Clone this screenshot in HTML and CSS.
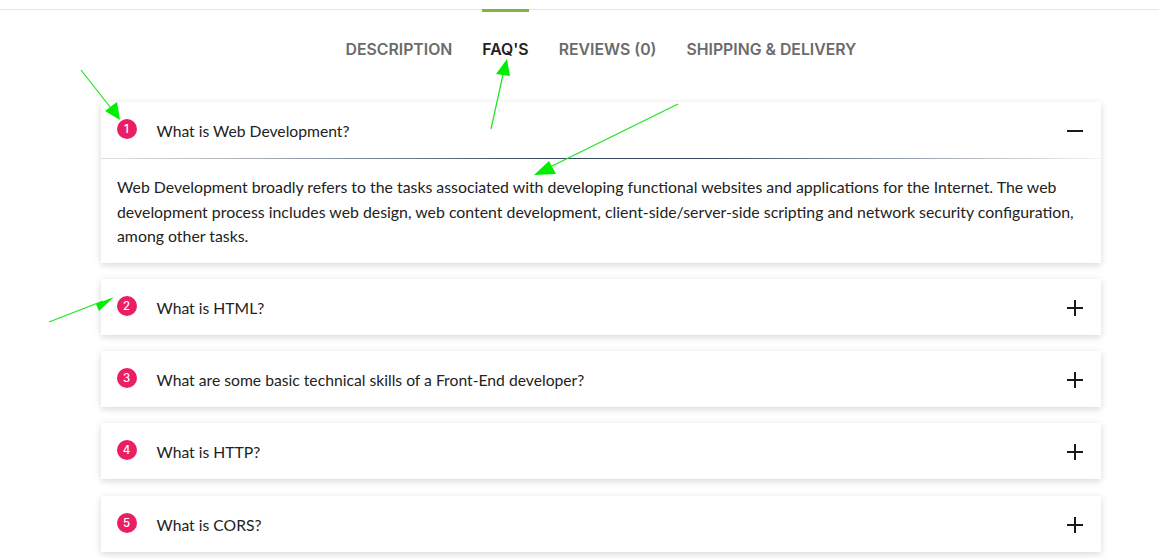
FILE: index.html
```html
<!DOCTYPE html>
<html lang="en">
<head>
<meta charset="utf-8">
<title>FAQ's</title>
<link rel="stylesheet" href="styles.css">
</head>
<body>
<div class="page">
  <div class="tabs-bar">
    <div class="container">
      <ul class="tabs">
        <li class="tab">Description</li>
        <li class="tab active">FAQ's</li>
        <li class="tab">Reviews (0)</li>
        <li class="tab">Shipping &amp; Delivery</li>
      </ul>
    </div>
  </div>

  <div class="container faq-list">
    <div class="faq open">
      <div class="faq-head">
        <span class="badge">1</span>
        <span class="question">What is Web Development?</span>
        <span class="toggle minus"></span>
      </div>
      <div class="faq-body">
        <p>Web Development broadly refers to the tasks associated with developing functional websites and applications for the Internet. The web development process includes web design, web content development, client-side/server-side scripting and network security configuration, among other tasks.</p>
      </div>
    </div>
    <div class="faq">
      <div class="faq-head">
        <span class="badge">2</span>
        <span class="question">What is HTML?</span>
        <span class="toggle plus"></span>
      </div>
    </div>
    <div class="faq">
      <div class="faq-head">
        <span class="badge">3</span>
        <span class="question">What are some basic technical skills of a Front-End developer?</span>
        <span class="toggle plus"></span>
      </div>
    </div>
    <div class="faq">
      <div class="faq-head">
        <span class="badge">4</span>
        <span class="question">What is HTTP?</span>
        <span class="toggle plus"></span>
      </div>
    </div>
    <div class="faq">
      <div class="faq-head">
        <span class="badge">5</span>
        <span class="question">What is CORS?</span>
        <span class="toggle plus"></span>
      </div>
    </div>
  </div>

  <svg class="annotations" width="1159" height="558" viewBox="0 0 1159 558">
    <g stroke="#19e619" stroke-width="1.2" fill="none">
      <line x1="81" y1="70" x2="114" y2="112"/>
      <line x1="491" y1="129" x2="504" y2="70"/>
      <line x1="678" y1="104" x2="546" y2="169"/>
      <line x1="49" y1="322" x2="103" y2="301"/>
    </g>
    <g fill="#00ee00">
      <polygon points="120,120 105,111 117,102"/>
      <polygon points="507,59 510,76 496,74"/>
      <polygon points="534,175 549,161 556,174"/>
      <polygon points="114,297 96,304 99,311"/>
    </g>
  </svg>
</div>
</body>
</html>
```
FILE: styles.css
```css
* { box-sizing: border-box; }

html, body {
  margin: 0;
  padding: 0;
  background: #ffffff;
}

body {
  font-family: "Lato", "Liberation Sans", sans-serif;
  color: #222222;
  overflow: hidden;
}

.page {
  position: relative;
  width: 1159px;
  height: 558px;
  padding-top: 9px;
}

.tabs-bar {
  border-top: 1px solid #e6e6e6;
}

.container {
  width: 1000px;
  margin-left: 101px;
}

.tabs {
  list-style: none;
  margin: 0;
  padding: 28px 0 0;
  display: flex;
  justify-content: center;
  gap: 30px;
}

.tab {
  position: relative;
  font-family: "Inter", "Open Sans", sans-serif;
  font-weight: 600;
  font-size: 15.8px;
  line-height: 24px;
  text-transform: uppercase;
  color: #6b6b6b;
  letter-spacing: 0;
}

.tab.active {
  color: #222222;
}

.tab.active::before {
  content: "";
  position: absolute;
  left: 0;
  right: 0;
  top: -29px;
  height: 3px;
  background: #81b441;
}

.faq-list {
  margin-top: 40px;
  display: flex;
  flex-direction: column;
  gap: 16.3px;
}

.faq {
  background: #ffffff;
  box-shadow: 0 2px 7px rgba(0, 0, 0, 0.16);
}

.faq-head {
  height: 56px;
  display: flex;
  align-items: center;
  padding: 2px 18px 0 15.5px;
}

.badge {
  width: 20px;
  height: 20px;
  border-radius: 50%;
  background: #ea1e63;
  color: #ffffff;
  font-family: "Inter", sans-serif;
  font-size: 11.5px;
  font-weight: 500;
  display: flex;
  align-items: center;
  justify-content: center;
  flex: none;
  margin-top: -4px;
}

.question {
  margin-left: 20px;
  font-size: 15.7px;
  color: #222222;
  flex: 1;
}

.toggle {
  position: relative;
  width: 16px;
  height: 16px;
  flex: none;
}

.toggle::before,
.toggle::after {
  content: "";
  position: absolute;
  background: #1a1a1a;
}

.toggle::before {
  left: 0;
  right: 0;
  top: 7px;
  height: 2px;
}

.plus::after {
  top: 0;
  bottom: 0;
  left: 7px;
  width: 2px;
}

.minus::after {
  display: none;
}

.faq-body {
  position: relative;
  padding: 17px 16px 14px;
}

.faq-body::before {
  content: "";
  position: absolute;
  left: 0;
  right: 0;
  top: 0;
  height: 1px;
  background: linear-gradient(to right, #e2e2e2 0%, #34495e 45%, #34495e 60%, #f2f2f2 100%);
}

.faq-body p {
  margin: 0;
  font-size: 15.85px;
  line-height: 24.5px;
  color: #222222;
}

.annotations {
  position: absolute;
  top: 0;
  left: 0;
  pointer-events: none;
}
```
